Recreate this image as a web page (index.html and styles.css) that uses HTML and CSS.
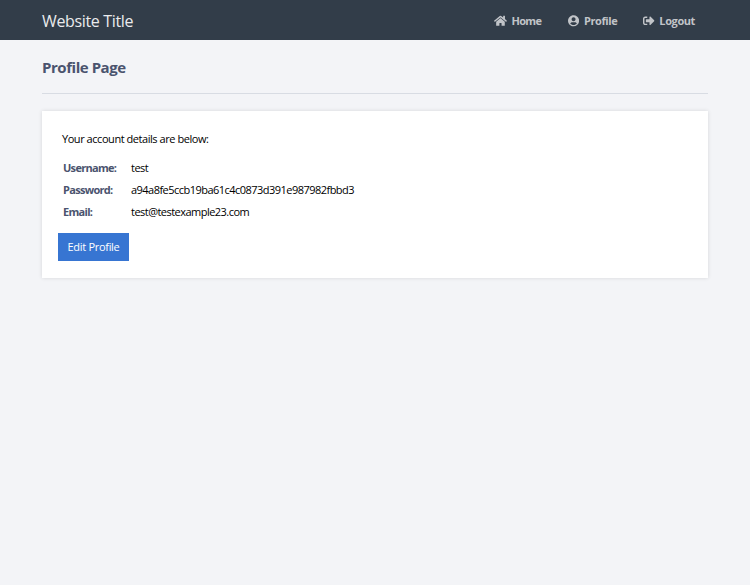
FILE: index.html
```html
<!DOCTYPE html>
<html lang="en">
<head>
<meta charset="utf-8">
<title>Profile Page</title>
<link rel="stylesheet" href="styles.css">
</head>
<body>
<nav class="navtop">
  <div class="navtop-inner">
    <h1>Website Title</h1>
    <a href="#"><svg class="icon" viewBox="0 0 576 512"><path d="M280.4 148.3L96 300.100V464a16 16 0 0 0 16 16l112.100-.3a16 16 0 0 0 15.900-16V368a16 16 0 0 1 16-16h64a16 16 0 0 1 16 16v95.600a16 16 0 0 0 16 16.100L464 480a16 16 0 0 0 16-16V300L295.700 148.300a12.200 12.200 0 0 0-15.300 0zM571.600 251.500L488 182.600V44a12 12 0 0 0-12-12h-56a12 12 0 0 0-12 12v72.600L318.500 43a48 48 0 0 0-61 0L4.300 251.500a12 12 0 0 0-1.600 16.900l25.500 31a12 12 0 0 0 16.900 1.600l235.200-193.700a12.200 12.200 0 0 1 15.300 0L530.900 301a12 12 0 0 0 16.900-1.600l25.500-31a12 12 0 0 0-1.700-16.900z"/></svg><span class="home-label">Home</span></a>
    <a href="#"><svg class="icon" viewBox="0 0 496 512"><path d="M248 8C111 8 0 119 0 256s111 248 248 248 248-111 248-248S385 8 248 8zm0 96c48.600 0 88 39.400 88 88s-39.400 88-88 88-88-39.400-88-88 39.400-88 88-88zm0 344c-58.700 0-111.300-26.600-146.500-68.200 18.800-35.400 55.600-59.800 98.500-59.800 2.400 0 4.800.4 7.100 1.100 13 4.200 26.600 6.900 40.900 6.900 14.300 0 28-2.700 40.900-6.900 2.300-.7 4.700-1.100 7.100-1.100 42.900 0 79.700 24.400 98.500 59.800C359.300 421.400 306.700 448 248 448z"/></svg><span>Profile</span></a>
    <a href="#"><svg class="icon" viewBox="0 0 512 512"><path d="M497 273L329 441c-15 15-41 4.500-41-17v-96H152c-13.300 0-24-10.700-24-24v-96c0-13.300 10.700-24 24-24h136V88c0-21.400 25.900-32 41-17l168 168c9.300 9.400 9.300 24.600 0 34zM192 436v-40c0-6.600-5.400-12-12-12H96c-17.700 0-32-14.300-32-32V160c0-17.700 14.300-32 32-32h84c6.600 0 12-5.400 12-12V76c0-6.600-5.400-12-12-12H96c-53 0-96 43-96 96v192c0 53 43 96 96 96h84c6.600 0 12-5.400 12-12z"/></svg><span>Logout</span></a>
  </div>
</nav>
<main class="content">
  <h2>Profile Page</h2>
  <div class="panel">
    <p>Your account details are below:</p>
    <table>
      <tr><th>Username:</th><td>test</td></tr>
      <tr><th>Password:</th><td>a94a8fe5ccb19ba61c4c0873d391e987982fbbd3</td></tr>
      <tr><th>Email:</th><td>test@testexample23.com</td></tr>
    </table>
    <a class="button" href="#">Edit Profile</a>
  </div>
</main>
</body>
</html>
```
FILE: styles.css
```css
* { box-sizing: border-box; }
body {
  margin: 0;
  min-height: 100vh;
  background: #f3f4f7;
  font-family: "Open Sans", "Noto Sans", sans-serif;
  font-size: 11px;
  color: #000;
}
.navtop { height: 40px; background: #323d49; padding: 0 42px; }
.navtop-inner { display: flex; align-items: center; height: 40px; }
h1 { flex: 1; margin: 0; font-size: 16px; font-weight: 400; color: #eaebed; line-height: 40px; padding-top: 2px; letter-spacing: -0.35px; }
.navtop a { display: flex; align-items: center; color: #c1c4c8; text-decoration: none; font-weight: 700; font-size: 11px; padding: 2px 13px 0; line-height: 38px; letter-spacing: -0.4px; }
.navtop .home-label { letter-spacing: -0.65px; margin-right: 1px; }
.icon { height: 11.5px; fill: #c1c4c8; margin-right: 4.5px; }
.content { padding: 0 42px 20px; }
h2 { margin: 0 0 17px; height: 54px; padding-top: 16px; line-height: 22px; font-size: 15px; font-weight: 700; color: #4a536e; border-bottom: 1px solid #d8dce3; letter-spacing: -0.45px; }
.panel { display: flow-root; height: 167px; background: #fff; padding: 19px 16px; box-shadow: 0 0 4px rgba(0,0,0,.12); }
p { margin: 0 4px 9px; line-height: 18px; letter-spacing: -0.45px; }
table { border-spacing: 0; margin: 0 0 10px 5px; }
th, td { height: 22px; padding: 0; text-align: left; line-height: 22px; letter-spacing: -0.53px; }
th { width: 68px; color: #4a536e; font-weight: 700; letter-spacing: -0.7px; }
.button { display: block; width: 71px; height: 28px; background: #3775d2; color: #fff; text-align: center; text-decoration: none; line-height: 28px; letter-spacing: -0.3px; }
```
